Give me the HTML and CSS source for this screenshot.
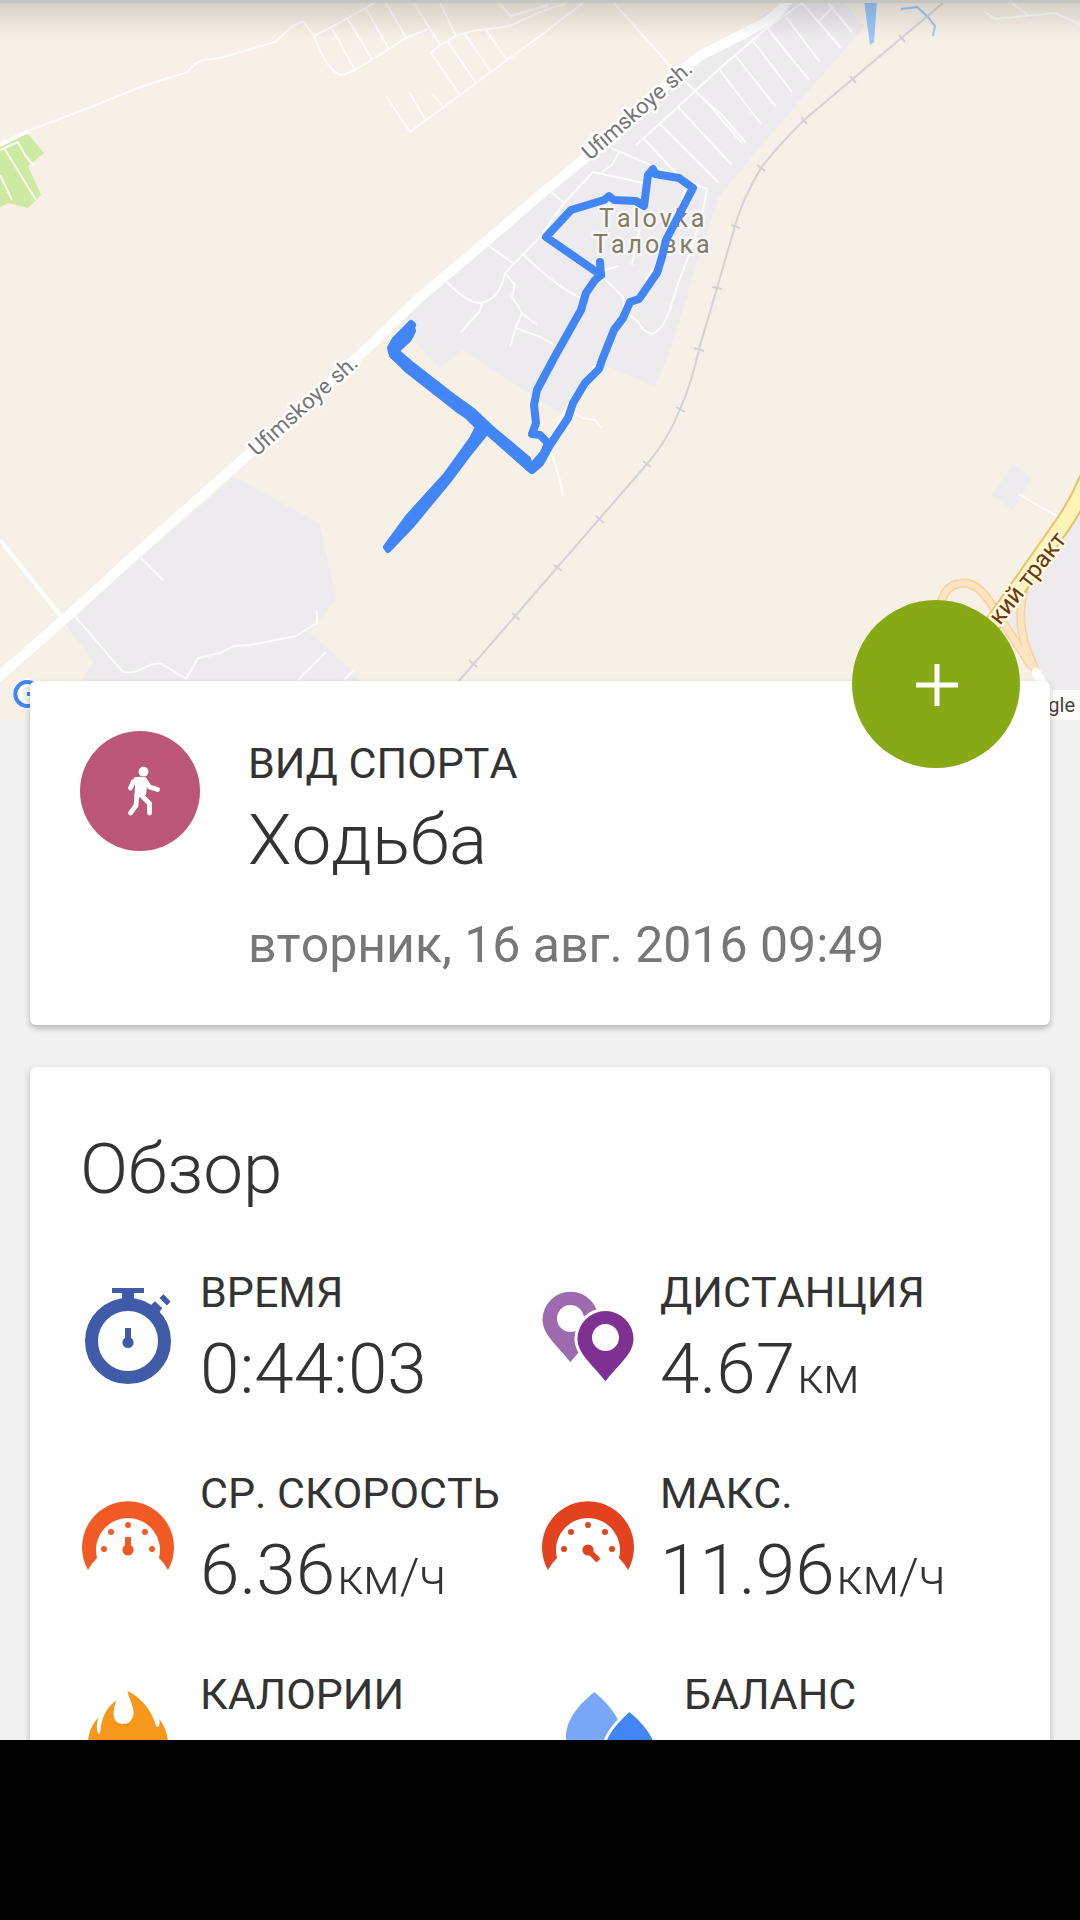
FILE: index.html
```html
<!DOCTYPE html>
<html lang="ru">
<head>
<meta charset="utf-8">
<meta name="viewport" content="width=device-width, initial-scale=1">
<title>Ходьба</title>
<link rel="stylesheet" href="styles.css">
</head>
<body>
<main class="screen">
  <section class="map">
    <svg class="map-canvas" viewBox="0 0 1080 720" role="img" aria-label="Talovka">
      <defs>
        <linearGradient id="shade" x1="0" y1="0" x2="0" y2="1">
          <stop offset="0" stop-color="#000" stop-opacity=".13"/>
          <stop offset="1" stop-color="#000" stop-opacity="0"/>
        </linearGradient>
      </defs>
      <rect width="1080" height="720" fill="#f7f0e6"/>

      <!-- built-up areas, park, water -->
      <g fill="#edebee">
        <path d="M786 0H843L864 27L760 147L719 197L698 260L669 353L655 386L609 367L561 413L527 392L463 350L440 368L415 342L400 318L540 195L690 65Z"/>
        <path d="M234 477L319 523L336 598L310 633L355 673L366 700H70L93 662L65 623Z"/>
        <path d="M1080 508L1040 570L1018 590L1000 615L1045 690H1080Z"/>
        <path d="M1013 464L1032 478L1013 510L992 495Z"/>
      </g>
      <path d="M0 144L28 134L44 153L28 166L41 195L28 208L8 203L0 207Z" fill="#cde9a2"/>
      <path d="M864 0H877L874 42L870 45Z" fill="#9ac7f8"/>
      <path d="M901 9L917 7L927 16L935 26L933 36" fill="none" stroke="#9ac7f8" stroke-width="2"/>

      <!-- minor roads -->
      <g class="street">
        <path d="M28 131L96 105L138 88L162 80L188 72Q194 63 203 60L220 58L275 42L291 27L303 21L314 36Q322 58 331 68Q337 75 343 75L355 70L389 49L406 38L428 29"/>
        <path d="M314 36L348 18L374 3M331 27L355 70M347 18L372 59M365 7L389 49M386 3L406 38M414 3L440 45M440 3L456 36"/>
        <path d="M460 95L431 53L440 45L456 36L472 31L510 26L540 12L566 3M448 42L476 83M465 34L491 72M486 30L507 60M386 96L410 132L460 95L507 60L540 36L583 3M409 92L425 119M432 93L443 107M499 3L511 16L548 5"/>
        <path d="M614 3L671 67L696 92L722 115L746 143M705 100L742 143"/>
        <path d="M802 3L767 28L719 69L678 107L636 145M802 3L841 48M828 3L852 32M819 21L833 7M786 17L820 62M767 28L809 80M752 40L792 92M734 54L776 107M719 69L761 124M678 107L732 165M659 123L719 183M643 138L678 175"/>
        <path d="M611 148L707 189Q702 225 678 283Q668 320 661 327Q650 342 638 322L624 310L623 297L604 278M619 152L612 165L602 172M643 183L593 172L564 203L550 191M564 203L540 237L505 273Q500 298 482 303Q468 304 447 282M488 245L513 263M523 254Q555 286 581 298M505 273L515 285L512 297L522 313L516 327L510 347M522 313L537 325M516 328L540 337L553 344M482 303L480 311L461 332M640 227L632 265M619 266L604 270M685 190Q665 255 645 280M597 363L573 396L553 432M540 337"/>
        <path d="M573 412L583 418L595 420L601 428M551 453Q560 475 563 496M984 11L995 19L1055 13L1080 24M1012 3L1028 15M1018 494L1057 516"/>
        <path d="M141 558L163 580M74 615L122 671C136 678 148 660 162 664L186 679L198 658L220 653L234 646L250 645L296 636L317 623V611M298 680L326 652M344 680L353 671"/>
        <path d="M0 150L18 142L25 155L34 166M4 148L36 200M0 175L12 200"/>
      </g>
      <path d="M0 145L28 131M0 540L64 620" fill="none" stroke="#fff" stroke-width="4"/>
      <path d="M-4 679L69 615L138 552L231 470L362 353L417 300L496 233L540 195L585 158L691 63Q700 55 712 50L760 25Q776 18 790 -2" fill="none" stroke="#fff" stroke-width="10"/>

      <!-- railway -->
      <path d="M943 3L804 120Q776 148 761 168Q742 200 735 226L717 288L699 349Q692 382 680 409Q668 440 647 464L458 682" fill="none" stroke="#d3d3d3" stroke-width="2"/>
      <path d="M899 35L905 42M850 76L856 83M801 117L807 124M757 165L765 171M731 225L740 228M712 287L722 289M694 348L704 351M676 407L685 412M643 461L651 467M596 516L604 523M554 565L562 571M512 613L520 620M469 660L477 667" stroke="#d3d3d3" stroke-width="2"/>

      <!-- highway and ramps -->
      <g fill="none">
        <path d="M941 604C944 588 954 583 965 583Q978 584 990 602L1032 667M1024 588Q1016 620 1027 650L1036 672" stroke="#fbd09a" stroke-width="9"/>
        <path d="M941 604C944 588 954 583 965 583Q978 584 990 602L1032 667M1024 588Q1016 620 1027 650L1036 672" stroke="#fde4c3" stroke-width="6"/>
        <path d="M1036 672L1050 695" stroke="#fff" stroke-width="9" stroke-linecap="round"/>
        <path d="M1088 478Q1078 502 1063 524L985 635" stroke="#e3c36d" stroke-width="18"/>
        <path d="M1088 478Q1078 502 1063 524L985 635" stroke="#fff3b5" stroke-width="14"/>
      </g>

      <!-- labels -->
      <text class="road-name" transform="translate(590 161) rotate(-41)">Ufimskoye sh.</text>
      <text class="road-name" transform="translate(257 457) rotate(-42)">Ufimskoye sh.</text>
      <text class="road-name road-name-major" transform="translate(1000 626) rotate(-52)">кий тракт</text>
      <text class="town" x="599" y="227">Talovka</text>
      <text class="town" x="593" y="253">Таловка</text>

      <!-- recorded track -->
      <g class="track">
        <path d="M600 262L601 275L546 237L571 210L604 200L609 196L614 200L636 201L644 206L648 175L653 169L655 174L679 178L693 188L666 240L662 257L657 273L639 299L630 302L623 318L614 330L602 360L599 369L585 383L573 403L568 418L550 445L540 463L532 470L473 418L460 408L430 383L407 366L393 355L392 350L397 340L412 325"/>
        <path d="M601 275L595 280L586 293L581 310L554 358L537 390L534 405L536 423L532 434L540 435L548 443L544 453L532 467"/>
      </g>
      <!-- stretches walked both ways read wider -->
      <g class="track track-wide">
        <path d="M395 339L411 323L413 331L409 339L396 351L410 363L455 398L473 411L491 428L528 459L532 471L487 431L470 452L449 480L411 526L388 550L386 547L408 517L446 475L472 439L478 427L467 416L458 410L407 370L392 355L390 348Z"/>
      </g>

      <path d="M30 682A12 12 0 1 0 30 706M30 694H27" fill="none" stroke="#fff" stroke-width="8"/>
      <path d="M34 684A12 12 0 1 0 34 704M34 694H27" fill="none" stroke="#4285f4" stroke-width="4"/>
      <rect x="940" y="690" width="140" height="30" fill="#fff" fill-opacity=".8"/>
      <text class="credit" x="1075" y="712">Google</text>

      <rect y="3" width="1080" height="35" fill="url(#shade)"/>
      <rect width="1080" height="3" fill="#c4c4c2"/>
    </svg>
  </section>

  <section class="card sport">
    <button class="fab" type="button" aria-label="Добавить">
      <svg viewBox="0 0 44 44" width="44" height="44"><path d="M23 2V44M2 23H44" stroke="#fff" stroke-width="5"/></svg>
    </button>
    <svg class="sport-icon" viewBox="0 0 120 120" aria-hidden="true">
      <circle cx="60" cy="60" r="60" fill="#bb5678"/>
      <circle cx="63.5" cy="40.7" r="4.9" fill="#fff"/>
      <path d="M54 46.5Q60 45 65 46.5L67 55L66 64L54.5 67L55 54Z" fill="#fff"/>
      <path d="M57 48.5L53.5 50.5L50.5 57M64.5 48.5L69.5 56L77.5 58.5M57 63L56 74.5L50.5 82M60 63L69.5 72.5V82" fill="none" stroke="#fff" stroke-width="4.8" stroke-linecap="round" stroke-linejoin="round"/>
    </svg>
    <div class="sport-text">
      <h2 class="label">ВИД СПОРТА</h2>
      <p class="value">Ходьба</p>
      <p class="date">вторник, 16 авг. 2016 09:49</p>
    </div>
  </section>

  <section class="card overview">
    <h1 class="value">Обзор</h1>
    <div class="stats">
      <div class="stat">
        <svg class="stat-icon" viewBox="0 0 96 96" aria-hidden="true" fill="#405ca8">
          <circle cx="48" cy="53" r="36.5" fill="none" stroke="#405ca8" stroke-width="13"/>
          <path d="M32 0H64V5H54V14H42V5H32ZM83.6 6.3L90.5 13.5L87 17.5L79.5 10ZM75 13.3L82.2 20L79.5 24L80 32L65 18L70 18Z"/>
          <path d="M45 40H51V52H45Z"/><circle cx="48" cy="54.5" r="5.6"/>
        </svg>
        <div class="stat-text">
          <h2 class="label">ВРЕМЯ</h2>
          <p class="value">0:44:03</p>
        </div>
      </div>
      <div class="stat">
        <svg class="stat-icon" viewBox="0 0 96 96" aria-hidden="true">
          <path fill="#9e6bb0" fill-rule="evenodd" d="M30.5 3.7A28 28 0 0 1 58.5 31.7C58.5 47 42 59 30.5 74.3C19 59 2.5 47 2.5 31.7A28 28 0 0 1 30.5 3.7ZM30.5 17A13.5 13.5 0 1 0 30.5 44A13.5 13.5 0 1 0 30.5 17Z"/>
          <path fill="#fff" stroke="#fff" stroke-width="6" d="M65.5 23A28 28 0 0 1 93.5 51C93.5 66 77 78 65.5 93.3C54 78 37.5 66 37.5 51A28 28 0 0 1 65.5 23Z"/>
          <path fill="#7e3192" fill-rule="evenodd" d="M65.5 23A28 28 0 0 1 93.5 51C93.5 66 77 78 65.5 93.3C54 78 37.5 66 37.5 51A28 28 0 0 1 65.5 23ZM65.5 36A13.5 13.5 0 1 0 65.5 63A13.5 13.5 0 1 0 65.5 36Z"/>
        </svg>
        <div class="stat-text">
          <h2 class="label">ДИСТАНЦИЯ</h2>
          <p class="value">4.67<span class="unit">км</span></p>
        </div>
      </div>
      <div class="stat">
        <svg class="stat-icon" viewBox="0 0 96 96" aria-hidden="true" fill="#f15a24">
          <path d="M8 81A46 46 0 1 1 88 81Q85 75 79 69A32 32 0 1 0 17 69Q11 75 8 81Z"/>
          <circle cx="48" cy="36" r="3"/><circle cx="31" cy="43" r="3"/><circle cx="65" cy="43" r="3"/><circle cx="24" cy="60" r="3"/><circle cx="72" cy="60" r="3"/>
          <circle cx="48" cy="61" r="5.6"/><path d="M45 48H51V60H45Z"/>
        </svg>
        <div class="stat-text">
          <h2 class="label">СР. СКОРОСТЬ</h2>
          <p class="value">6.36<span class="unit">км/ч</span></p>
        </div>
      </div>
      <div class="stat">
        <svg class="stat-icon" viewBox="0 0 96 96" aria-hidden="true" fill="#e2431e">
          <path d="M8 81A46 46 0 1 1 88 81Q85 75 79 69A32 32 0 1 0 17 69Q11 75 8 81Z"/>
          <circle cx="48" cy="36" r="3"/><circle cx="31" cy="43" r="3"/><circle cx="65" cy="43" r="3"/><circle cx="24" cy="60" r="3"/><circle cx="72" cy="60" r="3"/>
          <circle cx="48" cy="61" r="5.6"/><path d="M48 61L58.5 71.5" stroke="#e2431e" stroke-width="5.5"/>
        </svg>
        <div class="stat-text">
          <h2 class="label">МАКС.</h2>
          <p class="value">11.96<span class="unit">км/ч</span></p>
        </div>
      </div>
      <div class="stat">
        <svg class="stat-icon" viewBox="0 0 96 96" aria-hidden="true" fill="#f7981d">
          <path d="M47.4 .7C49 9 54 16 53.6 24Q52 34 42 34Q33 33 33.6 22Q34 16 36.5 10.5C26 17 21.5 29 20.5 40Q20 44 18.5 44Q15 38 18.5 27.5C12 34 8 43 8 54C8 78 24 94 48 94S88 78 88 54C88 45 85 37 79.5 29Q80 33 79 36Q78 38 76 36C72 21 62 8 47.4 .7Z"/>
        </svg>
        <div class="stat-text">
          <h2 class="label">КАЛОРИИ</h2>
        </div>
      </div>
      <div class="stat stat-inset">
        <svg class="stat-icon" viewBox="0 0 96 96" aria-hidden="true">
          <path fill="#78a7f8" d="M30.5 2C42 12 58 28 58 46A28 28 0 0 1 2 46C2 30 15 14 30.5 2Z"/>
          <path fill="#4285f4" stroke="#fff" stroke-width="3" d="M65.5 20C80 32 94 48 94 66A28 28 0 0 1 38 66C38 48 50 34 65.5 20Z"/>
        </svg>
        <div class="stat-text">
          <h2 class="label">БАЛАНС</h2>
        </div>
      </div>
    </div>
  </section>
</main>
<footer class="system-bar"></footer>
</body>
</html>
```

FILE: styles.css
```css
* {
  box-sizing: border-box;
}

body {
  margin: 0;
  height: 100vh;
  display: flex;
  flex-direction: column;
  background: #000;
  color: #333;
  font-family: Roboto, "Noto Sans", sans-serif;
  font-kerning: none;
}

h1,
h2,
p {
  margin: 0;
}

.screen {
  flex: 1;
  min-height: 0;
  overflow: hidden;
  background: #f1f1f1;
}

.system-bar {
  flex: none;
  height: 180px;
}

.map-canvas {
  display: block;
  width: 100%;
}

.street {
  fill: none;
  stroke: #fff;
  stroke-width: 2;
  stroke-opacity: 0.85;
  stroke-linejoin: round;
}

.track {
  fill: none;
  stroke: #4285f4;
  stroke-width: 8;
  stroke-linecap: round;
  stroke-linejoin: round;
}

.track-wide {
  fill: #4285f4;
  stroke-width: 6;
}

.road-name {
  font-size: 22px;
  fill: #757575;
  stroke: #fff;
  stroke-width: 5px;
  stroke-linejoin: round;
  paint-order: stroke;
}

.road-name-major {
  font-size: 24px;
  fill: #6b3a0a;
  stroke: #fff8dc;
}

.town {
  font-size: 25px;
  letter-spacing: 3px;
  fill: #857b63;
  stroke: #f6f5f7;
  stroke-width: 5px;
  stroke-linejoin: round;
  paint-order: stroke;
}

.credit {
  font-size: 20px;
  fill: #444;
  text-anchor: end;
}

.card {
  position: relative;
  margin: 0 30px;
  padding: 50px;
  background: #fff;
  border-radius: 6px;
  box-shadow: 0 3px 6px rgba(0, 0, 0, 0.26);
}

.sport {
  display: flex;
  gap: 48px;
  margin-top: -39px;
}

.sport-icon {
  flex: none;
  width: 120px;
  height: 120px;
}

.sport-text {
  padding-top: 7px;
}

.label {
  font-size: 43px;
  line-height: 50px;
  font-weight: 400;
}

.value {
  font-size: 71px;
  line-height: 84px;
  font-weight: 300;
}

.label + .value {
  margin-top: 10px;
}

.date {
  margin-top: 33px;
  font-size: 50px;
  line-height: 60px;
  color: #777;
}

.fab {
  position: absolute;
  top: -81px;
  right: 30px;
  display: grid;
  place-items: center;
  width: 168px;
  height: 168px;
  padding: 0;
  border: 0;
  border-radius: 50%;
  background: #86a915;
}

.overview {
  margin-top: 42px;
  padding-top: 60px;
}

.stats {
  display: grid;
  grid-template-columns: 1fr 1fr;
  gap: 57px 0;
  margin-top: 56px;
}

.stat {
  display: flex;
  gap: 24px;
  white-space: nowrap;
}

.stat-inset {
  padding-left: 24px;
}

.stat-icon {
  flex: none;
  width: 96px;
  height: 96px;
  margin-top: 21px;
}

.unit {
  margin-left: 2px;
  font-size: 50px;
  line-height: 50px;
}
```
